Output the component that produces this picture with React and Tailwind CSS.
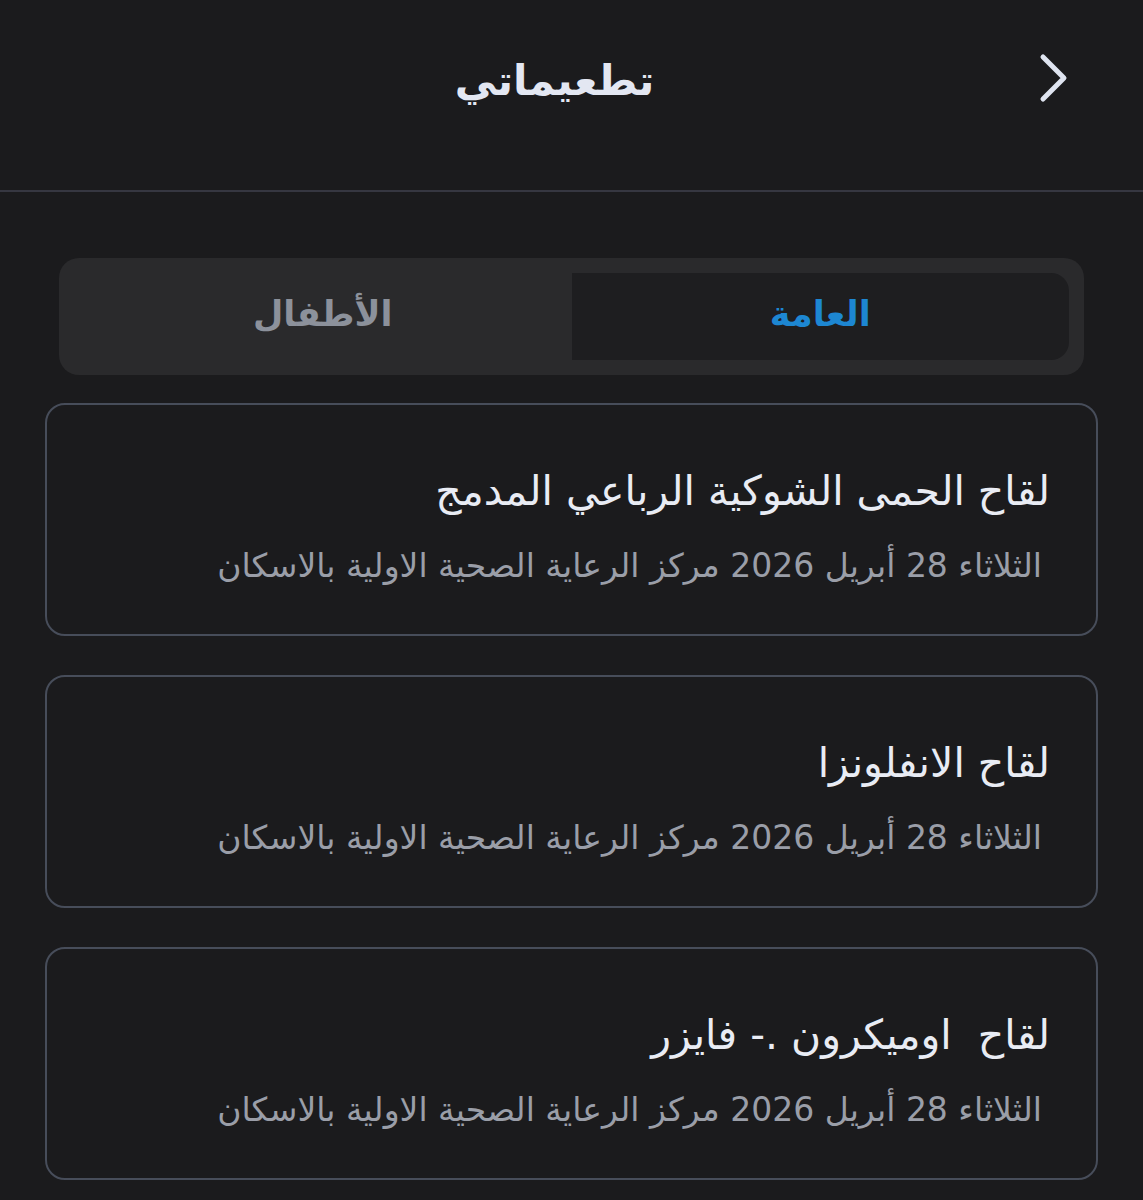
import React, { useState } from "react";

const vaccines = [
  { name: "لقاح الحمى الشوكية الرباعي المدمج" },
  { name: "لقاح الانفلونزا" },
  { name: "لقاح  اوميكرون .- فايزر" },
];

const details = "الثلاثاء 28 أبريل 2026 مركز الرعاية الصحية الاولية بالاسكان";

const BackIcon = () => (
  <svg viewBox="0 0 30 50" className="h-[50px] w-[30px]" fill="none">
    <polyline
      points="5,4 26,25 5,46"
      stroke="currentColor"
      strokeWidth="5"
      strokeLinecap="round"
      strokeLinejoin="round"
    />
  </svg>
);

export default function App() {
  const [tab, setTab] = useState("general");
  return (
    <div
      dir="rtl"
      className="min-h-screen bg-[#1b1b1d] text-[#e6e9f2]"
      style={{ fontFamily: '"DejaVu Sans", "Noto Sans", sans-serif' }}
    >
      {/* HEADER */}
      <header className="relative flex h-[192px] items-center justify-center border-b-2 border-[#363741] pr-[34px]">
        <button className="absolute right-[75px] top-[53px] text-[#dfe4f0]">
          <BackIcon />
        </button>
        <h1 className="-mt-[30px] text-[42px] font-bold text-[#e3e7f2]">تطعيماتي</h1>
      </header>

      {/* TABS */}
      <div className="mx-[59px] mt-[66px] flex h-[117px] rounded-[20px] bg-[#2a2a2c] p-[15px]">
        <button
          onClick={() => setTab("general")}
          className={
            "flex flex-1 items-center justify-center rounded-r-[18px] pb-[4px] text-[35px] font-bold " +
            (tab === "general" ? "bg-[#1e1e20] text-[#1d87d2]" : "text-[#8c919b]")
          }
        >
          العامة
        </button>
        <button
          onClick={() => setTab("kids")}
          className={
            "flex flex-1 items-center justify-center rounded-l-[18px] pb-[4px] text-[35px] font-bold " +
            (tab === "kids" ? "bg-[#1e1e20] text-[#1d87d2]" : "text-[#8c919b]")
          }
        >
          الأطفال
        </button>
      </div>

      {/* LIST */}
      <div className="mx-[45px] mt-[28px] flex flex-col gap-[39px]">
        {vaccines.map((v, i) => (
          <div
            key={i}
            className="flex h-[233px] flex-col justify-center rounded-[20px] border-2 border-[#474d5a] px-[46px] pt-[12px]"
          >
            <div className="whitespace-pre text-[41px] leading-[52px] text-[#e9ecf4]">{v.name}</div>
            <div className="mt-[28px] pr-[8px] text-[33px] leading-[42px] text-[#9a9ea8]">{details}</div>
          </div>
        ))}
      </div>
    </div>
  );
}
